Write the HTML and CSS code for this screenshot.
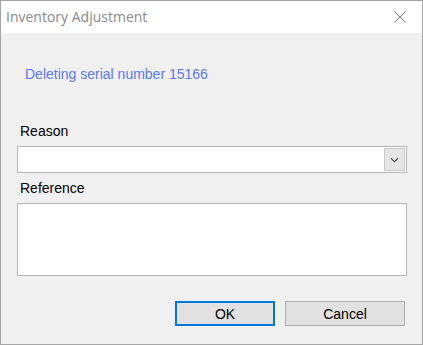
FILE: index.html
```html
<!DOCTYPE html>
<html>
<head>
<meta charset="utf-8">
<link rel="stylesheet" href="styles.css">
</head>
<body>
<div class="window">
  <div class="titlebar">
    <span class="title">Inventory Adjustment</span>
    <svg class="close" width="12" height="12" viewBox="0 0 12 12"><path d="M0.5 0.5 L11.5 11.5 M11.5 0.5 L0.5 11.5" stroke="#777" stroke-width="1" fill="none"/></svg>
  </div>
  <div class="content">
    <div class="message">Deleting serial number 15166</div>
    <div class="label reason-label">Reason</div>
    <div class="combo">
      <div class="combo-btn">
        <svg width="9" height="6" viewBox="0 0 9 6"><path d="M1 1.2 L4.5 4.6 L8 1.2" stroke="#555" stroke-width="1.3" fill="none"/></svg>
      </div>
    </div>
    <div class="label ref-label">Reference</div>
    <div class="textarea"></div>
    <div class="buttons">
      <div class="btn ok">OK</div>
      <div class="btn cancel">Cancel</div>
    </div>
  </div>
</div>
</body>
</html>
```
FILE: styles.css
```css
* { box-sizing: border-box; }
html, body { margin: 0; padding: 0; background: #f0f0f0; }
.window {
  width: 423px;
  height: 345px;
  border: 1px solid #a5a5a5;
  background: #f0f0f0;
  display: flex;
  flex-direction: column;
  font-family: "Liberation Sans", Arial, sans-serif;
}
.titlebar {
  height: 32px;
  background: #ffffff;
  display: flex;
  align-items: center;
  justify-content: space-between;
  padding: 0 16px 0 5px;
}
.title {
  font-family: "Open Sans", "Noto Sans", sans-serif;
  font-size: 14px;
  color: #8a8a8a;
  margin-top: -2px;
}
.close { margin-top: -1px; }
.content {
  flex: 1;
  display: flex;
  flex-direction: column;
  padding: 0 15px 0 16px;
}
.message {
  margin-top: 34px;
  margin-left: 8px;
  font-size: 14px;
  line-height: 14px;
  color: #5b78f0;
}
.label {
  font-size: 14px;
  line-height: 14px;
  color: #000;
  margin-left: 3px;
}
.reason-label { margin-top: 43px; }
.combo {
  margin-top: 8px;
  height: 27px;
  background: #fff;
  border: 1px solid #b4b4b4;
  display: flex;
  justify-content: flex-end;
  align-items: center;
  padding-right: 1px;
}
.combo-btn {
  width: 21px;
  height: 23px;
  background: #e5e5e5;
  border: 1px solid #c8c8c8;
  display: flex;
  align-items: center;
  justify-content: center;
}
.ref-label { margin-top: 8px; }
.textarea {
  margin-top: 8px;
  height: 73px;
  background: #fff;
  border: 1px solid #b4b4b4;
}
.buttons {
  margin-top: 25px;
  display: flex;
  justify-content: flex-end;
  gap: 10px;
  padding-right: 2px;
}
.btn {
  height: 25px;
  border: 1px solid #adadad;
  background: #e1e1e1;
  font-size: 14px;
  display: flex;
  align-items: center;
  justify-content: center;
  color: #000;
}
.ok { width: 100px; border: 2px solid #0078d7; }
.cancel { width: 120px; }
```
